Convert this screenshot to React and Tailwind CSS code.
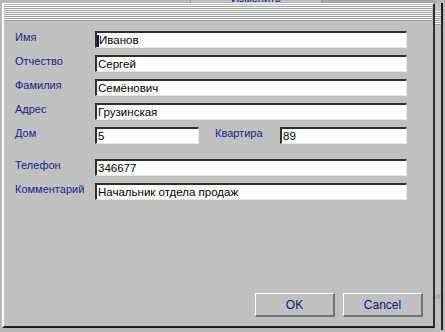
// App.jsx
const rows = [
  { label: "Имя", value: "Иванов", caret: true },
  { label: "Отчество", value: "Сергей" },
  { label: "Фамилия", value: "Семёнович" },
  { label: "Адрес", value: "Грузинская" },
];

function Field({ value, caret, className = "" }) {
  return (
    <div
      className={`h-[17px] bg-white border-t-2 border-l-2 border-t-[#303030] border-l-[#303030] border-b border-r border-b-[#e8e8e8] border-r-[#e8e8e8] flex items-center pl-[1px] pt-[1px] text-[11.5px] leading-none text-black ${className}`}
    >
      {caret && <span className="w-[2px] h-[12px] bg-[#101060] -ml-[1px]" />}
      <span>{value}</span>
    </div>
  );
}

function Label({ children, className = "" }) {
  return (
    <div className={`text-[11px] leading-none text-[#1c1c8c] ${className}`}>
      {children}
    </div>
  );
}

function Button({ children }) {
  return (
    <button className="w-[80px] h-[24px] bg-[#c0c0c0] border-t border-l border-t-white border-l-white border-b-2 border-r-2 border-b-[#707070] border-r-[#707070] text-[12px] text-[#10107a]">
      {children}
    </button>
  );
}

export default function App() {
  return (
    <div
      className="relative w-[445px] h-[332px] bg-[#b8b8b8] overflow-hidden"
      style={{ fontFamily: '"Liberation Sans", Arial, sans-serif' }}
    >
      {/* window behind */}
      <div className="absolute left-[190px] top-0 w-[132px] h-[4px] bg-[#c0c0c0] border-l border-r border-[#909090] flex justify-center">
        <span className="text-[11px] leading-none -mt-[7px] text-[#1c1c8c]">Изменить</span>
      </div>
      <div className="absolute left-[322px] top-0 w-[114px] h-[4px] bg-[#a8a8a8]" />
      <div className="absolute left-[435px] top-[3px] w-[8px] h-[327px] bg-[#c0c0c0] border-r-2 border-r-[#202020]">
        <div className="mt-[8px] h-[14px] bg-[repeating-linear-gradient(180deg,#ffffff_0px,#ffffff_1px,#a0a0a0_1px,#a0a0a0_2px)]" />
        <div className="absolute left-[1px] top-[290px] text-[8px] leading-none text-[#808080]">//</div>
      </div>

      {/* dialog */}
      <div className="absolute left-[2px] top-[3px] w-[433px] h-[325px] bg-[#c0c0c0] border-l-2 border-t border-l-white border-t-white border-r-2 border-b-2 border-r-[#303030] border-b-[#202020] flex flex-col">
        <div className="h-[16px] mx-[1px] mt-[1px] bg-[repeating-linear-gradient(180deg,#ffffff_0px,#ffffff_1px,#a0a0a0_1px,#a0a0a0_2px)]" />
        <div className="flex-1 flex flex-col pt-[10px] pl-[11px]">
          {rows.map((r) => (
            <div key={r.label} className="flex h-[17px] mb-[7px]">
              <Label className="w-[80px] pt-[1px]">{r.label}</Label>
              <Field value={r.value} caret={r.caret} className="w-[312px]" />
            </div>
          ))}
          <div className="flex h-[17px] mb-[15px]">
            <Label className="w-[80px] pt-[1px]">Дом</Label>
            <Field value="5" className="w-[104px]" />
            <Label className="w-[81px] pl-[16px] pt-[1px]">Квартира</Label>
            <Field value="89" className="w-[127px]" />
          </div>
          <div className="flex h-[17px] mb-[7px]">
            <Label className="w-[80px] pt-[1px]">Телефон</Label>
            <Field value="346677" className="w-[312px]" />
          </div>
          <div className="flex h-[17px]">
            <Label className="w-[80px] pt-[1px]">Комментарий</Label>
            <Field value="Начальник отдела продаж" className="w-[312px]" />
          </div>
          <div className="flex-1" />
          <div className="flex gap-[8px] justify-end pr-[10px] pb-[9px]">
            <Button>OK</Button>
            <Button>Cancel</Button>
          </div>
        </div>
      </div>
    </div>
  );
}
